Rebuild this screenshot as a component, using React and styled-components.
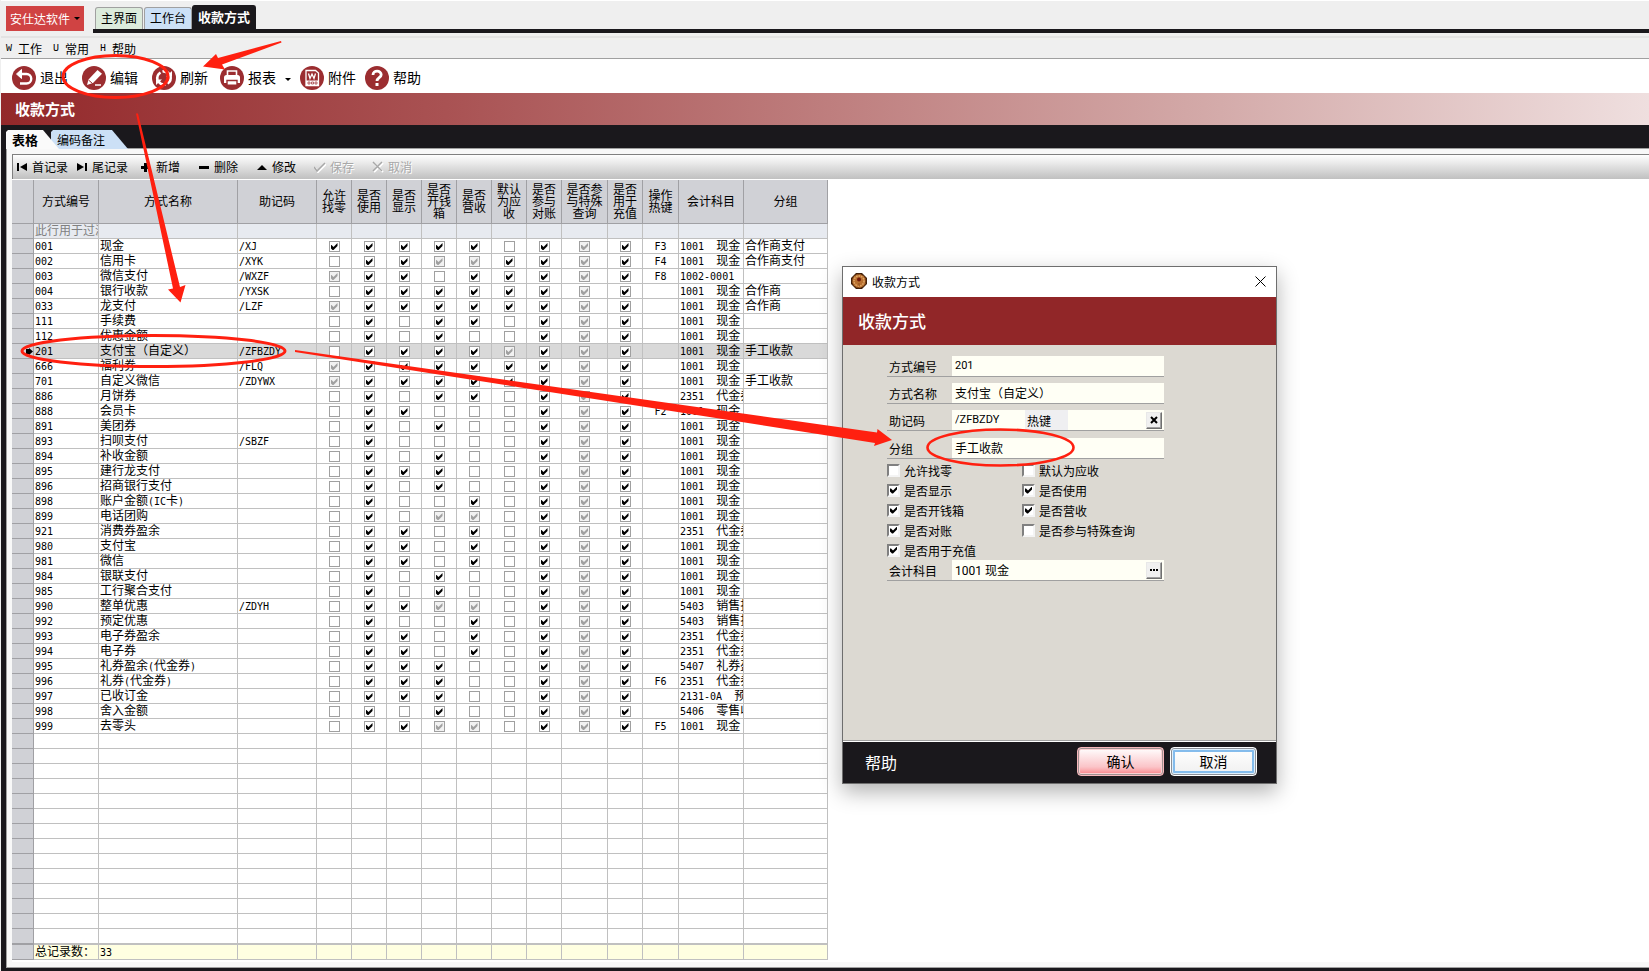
import React from "react";
import styled, { createGlobalStyle, css } from "styled-components";

const GlobalStyle = createGlobalStyle`
  *, *::before, *::after { box-sizing: border-box; }
  html, body { margin: 0; background: #fff; }
  body, button, input, table {
    font-family: "Noto Sans CJK SC", sans-serif;
    font-size: 12px;
    color: #000;
  }
  button { margin: 0; padding: 0; border: 0; background: none; white-space: nowrap; }
  a { color: inherit; text-decoration: none; }
`;

const INK = "#1a181c";
const WINE = "#912628";
const MARK = "#ff2010";

/* ---------- application frame ---------- */

const Page = styled.div`
  position: relative;
  display: flex;
  flex-direction: column;
  min-height: 100vh;
  padding-left: 1px;
  background: #efefef;
  overflow: hidden;
`;

const TopBar = styled.header`
  display: flex;
  align-items: flex-start;
  gap: 9px;
  height: 36px;
  padding-left: 5px;
  border-top: 1px solid #fff;
`;

const BrandButton = styled.button`
  display: flex;
  align-items: center;
  justify-content: center;
  gap: 4px;
  width: 78px;
  height: 25px;
  margin-top: 5px;
  background: #d04343;
  color: #fff;
`;

const Caret = styled.span`
  border: 3px solid transparent;
  border-top-color: #000;
  border-bottom-width: 0;
`;

const ModuleTabs = styled.nav`
  display: flex;
  flex: 1;
  align-items: flex-end;
  height: 32px;
  padding-left: 2px;
  border-bottom: 4px solid ${INK};
`;

const ModuleTab = styled.a`
  display: flex;
  align-items: center;
  justify-content: center;
  width: 48px;
  height: 22px;
  margin-right: 1px;
  padding-bottom: 2px;
  border: 1px solid #a0a0a0;
  border-bottom: 0;
  border-radius: 3px 3px 0 0;
  background: ${(p) => p.$tint};
  ${(p) =>
    p.$active &&
    css`
      width: 64px;
      height: 24px;
      margin-left: -1px;
      border-color: ${INK};
      background: ${INK};
      color: #fff;
      font-size: 13px;
      font-weight: 700;
    `}
`;

const MenuBar = styled.nav`
  display: flex;
  align-items: center;
  gap: 11px;
  height: 23px;
  padding-left: 5px;
  border-top: 2px solid #e3e3e3;
  border-bottom: 1px solid #a0a0a0;
`;

const MenuItem = styled.button`
  display: flex;
  align-items: center;
  gap: 6px;
`;

const AccessKey = styled.span`
  width: 6px;
  font-family: "Liberation Mono", monospace;
  font-size: 10px;
`;

const ToolBar = styled.div`
  display: flex;
  align-items: center;
  gap: 12px;
  height: 34px;
  padding: 4px 0 0 11px;
  background: #fff;
`;

const ToolGroup = styled.div`
  display: flex;
  align-items: center;
  gap: ${(p) => p.$gap};
`;

const ToolButton = styled.button`
  display: flex;
  align-items: center;
  gap: 4px;
  font-size: 14px;
  line-height: 24px;

  svg { display: block; }
  ${Caret} { margin: 2px 0 0 5px; }
`;

const ToolText = styled.span`
  padding-bottom: 2px;
  line-height: 22px;
`;

const Banner = styled.h1`
  height: 32px;
  margin: 0;
  padding-left: 14px;
  background: linear-gradient(90deg, #93282a 0%, #a95253 27%, #d3a9a8 73%, #efdfdf 100%);
  color: #fff;
  font-size: 15px;
  font-weight: 700;
  line-height: 31px;
`;

const WorkArea = styled.main`
  display: flex;
  flex: 1;
  flex-direction: column;
  padding: 0 0 3px 5px;
  background: ${INK};
`;

const SheetTabs = styled.div`
  display: flex;
  align-items: flex-end;
  height: 24px;
  margin-bottom: -1px;
`;

const SheetTab = styled.button`
  width: ${(p) => p.$width};
  height: 19px;
  padding-left: 6px;
  clip-path: polygon(0 2px, 2px 0, calc(100% - 16px) 0, 100% 100%, 0 100%);
  background: ${(p) => (p.$active ? "#fafafa" : "#cce0f6")};
  font-weight: ${(p) => (p.$active ? 700 : 400)};
  line-height: 19px;
  text-align: left;

  ${(p) =>
    p.$active &&
    css`
      position: relative;
      z-index: 1;
      margin-right: -8px;
      font-size: 13px;
    `}
`;

const Sheet = styled.section`
  display: flex;
  flex: 1;
  flex-direction: column;
  padding: 5px 0 5px 5px;
  border: solid #a0a0a0;
  border-width: 1px 0 1px 1px;
  background: #f8f8f8;
`;

const RecordBar = styled.div`
  display: flex;
  height: 25px;
  border-top: 1px solid #808080;
  border-left: 1px solid #808080;
  background: linear-gradient(#fff, #c0c0c0);
`;

const RecordButton = styled.button`
  display: flex;
  align-items: center;
  gap: 4px;
  width: ${(p) => (p.$wide ? "60px" : "58px")};
  padding: 0 0 1px ${(p) => (p.$wide ? "3px" : "7px")};

  &:disabled {
    color: #a8a8a8;
    text-shadow: 1px 1px 0 #fff;
  }
`;

const GridArea = styled.div`
  flex: 1;
  padding: 1px 0 2px;
  background: #fff;
`;

/* ---------- grid ---------- */

const Grid = styled.table`
  width: 816px;
  table-layout: fixed;
  border-collapse: separate;
  border-spacing: 0;
`;

const HeadCell = styled.th`
  height: 44px;
  padding: 0 0 2px;
  border: solid #a0a0a4;
  border-width: 0 1px 1px 0;
  background: #d0d1d6;
  font-weight: 400;
  line-height: 12px;
  word-break: break-all;
`;

const Cell = styled.td`
  height: 15px;
  padding: 0 1px;
  overflow-x: clip;
  overflow-y: visible;
  border: solid #c0c0c0;
  border-width: 0 1px 1px 0;
  background: ${(p) => p.$bg || "#fff"};
  color: ${(p) => p.$color || "#000"};
  line-height: 12px;
  text-align: ${(p) => p.$align || "left"};
  vertical-align: top;
  white-space: pre;
`;

const RowMark = styled(Cell)`
  padding: 0;
  border-color: #a0a0a4;
  background: #d0d1d6;
  vertical-align: middle;

  svg { display: block; margin-left: auto; }
`;

const LastRow = styled.tr`
  td { height: 16px; border-bottom-width: 2px; }
`;

const Latin = styled.span`
  font-family: "DejaVu Sans Mono", monospace;
  font-size: 10px;
  line-height: 10px;
`;

const Tick = css`
  &:checked::before {
    content: "";
    width: 7px;
    height: 7px;
    background: currentColor;
    clip-path: polygon(0 2px, 1px 2px, 3px 4px, 7px 0, 7px 3px, 3px 7px, 2px 7px, 0 5px);
  }
`;

const GridCheck = styled.input.attrs({ type: "checkbox" })`
  appearance: none;
  display: flex;
  align-items: center;
  justify-content: center;
  width: 11px;
  height: 11px;
  margin: 2px auto 1px;
  border: 1px solid #a0a0a0;
  background: ${(p) => (p.$mixed ? "#f2f2f2" : "#fff")};
  color: ${(p) => (p.$mixed ? "#a0a0a0" : "#000")};
  ${Tick}
`;

const COLUMNS = [
  ["方式编号", 65],
  ["方式名称", 139],
  ["助记码", 79],
  ["允许找零", 35],
  ["是否使用", 35],
  ["是否显示", 35],
  ["是否开钱箱", 35],
  ["是否营收", 35],
  ["默认为应收", 35],
  ["是否参与对账", 35],
  ["是否参与特殊查询", 46],
  ["是否用于充值", 35],
  ["操作热键", 36],
  ["会计科目", 65],
  ["分组", 84],
];

/* Flags: allow change, shown, opens till, revenue, receivable. "g" is the undefined state. */
const CASH = "1001  现金";
const VOUCHER = "2351  代金券";
const RECORDS = [
  ["001", "现金", "/XJ", "11110", "F3", CASH, "合作商支付"],
  ["002", "信用卡", "/XYK", "01gg1", "F4", CASH, "合作商支付"],
  ["003", "微信支付", "/WXZF", "g1011", "F8", "1002-0001", ""],
  ["004", "银行收款", "/YXSK", "01111", "", CASH, "合作商"],
  ["033", "龙支付", "/LZF", "g1111", "", CASH, "合作商"],
  ["111", "手续费", "", "00110", "", CASH, ""],
  ["112", "优惠金额", "", "00100", "", CASH, ""],
  ["201", "支付宝（自定义）", "/ZFBZDY", "0111g", "", CASH, "手工收款"],
  ["666", "福利券", "/FLQ", "g1111", "", CASH, ""],
  ["701", "自定义微信", "/ZDYWX", "g1111", "", CASH, "手工收款"],
  ["886", "月饼券", "", "00110", "", VOUCHER, ""],
  ["888", "会员卡", "", "01000", "F2", CASH, ""],
  ["891", "美团券", "", "00100", "", CASH, ""],
  ["893", "扫呗支付", "/SBZF", "00000", "", CASH, ""],
  ["894", "补收金额", "", "00100", "", CASH, ""],
  ["895", "建行龙支付", "", "01100", "", CASH, ""],
  ["896", "招商银行支付", "", "00100", "", CASH, ""],
  ["898", "账户金额(IC卡)", "", "00010", "", CASH, ""],
  ["899", "电话团购", "", "00gg0", "", CASH, ""],
  ["921", "消费券盈余", "", "01010", "", VOUCHER, ""],
  ["980", "支付宝", "", "01010", "", CASH, ""],
  ["981", "微信", "", "01010", "", CASH, ""],
  ["984", "银联支付", "", "00100", "", CASH, ""],
  ["985", "工行聚合支付", "", "00100", "", CASH, ""],
  ["990", "整单优惠", "/ZDYH", "01gg0", "", "5403  销售折扣", ""],
  ["992", "预定优惠", "", "00010", "", "5403  销售折扣", ""],
  ["993", "电子券盈余", "", "01010", "", VOUCHER, ""],
  ["994", "电子券", "", "01010", "", VOUCHER, ""],
  ["995", "礼券盈余(代金券)", "", "01100", "", "5407  礼券盈余", ""],
  ["996", "礼券(代金券)", "", "01100", "F6", VOUCHER, ""],
  ["997", "已收订金", "", "01100", "", "2131-0A  预收", ""],
  ["998", "舍入金额", "", "00100", "", "5406  零售收入", ""],
  ["999", "去零头", "", "01gg0", "F5", CASH, ""],
];
const SELECTED = "201";
const EMPTY_ROWS = 14;

function Mixed({ text }) {
  return text
    .split(/([\x20-\x7e]+)/)
    .filter(Boolean)
    .map((part, i) => (/^[\x20-\x7e]/.test(part) ? <Latin key={i}>{part}</Latin> : part));
}

function RecordRow({ record }) {
  const [id, name, mnemonic, flags, hotkey, account, group] = record;
  const selected = id === SELECTED;
  const bg = selected ? "#d9d9d9" : "#fff";
  const [change, shown, till, revenue, receivable] = flags;
  const states = [change, "1", shown, till, revenue, receivable, "1", "g", "1"];
  return (
    <tr aria-selected={selected}>
      <RowMark>
        {selected && (
          <svg width="7" height="7" viewBox="0 0 7 7">
            <path d="M0 1h3V0l4 3.5L3 7V6H0z" />
          </svg>
        )}
      </RowMark>
      {[id, name, mnemonic].map((text, i) => (
        <Cell key={i} $bg={bg}>
          <Mixed text={text} />
        </Cell>
      ))}
      {states.map((state, i) => (
        <Cell key={i} $bg={bg}>
          <GridCheck
            aria-label={`${name} ${COLUMNS[i + 3][0]}`}
            defaultChecked={state !== "0"}
            $mixed={state === "g"}
          />
        </Cell>
      ))}
      <Cell $bg={bg} $align="center">
        <Mixed text={hotkey} />
      </Cell>
      <Cell $bg={bg}>
        <Mixed text={account} />
      </Cell>
      <Cell $bg={bg}>{group}</Cell>
    </tr>
  );
}

function BlankCells({ texts = [], ...rest }) {
  return COLUMNS.map((column, i) => (
    <Cell key={column[0]} {...rest}>
      <Mixed text={texts[i] || ""} />
    </Cell>
  ));
}

function PaymentGrid() {
  return (
    <Grid>
      <colgroup>
        <col width="22" />
        {COLUMNS.map(([title, width]) => (
          <col key={title} width={width} />
        ))}
      </colgroup>
      <thead>
        <tr>
          <HeadCell />
          {COLUMNS.map(([title]) => (
            <HeadCell key={title} scope="col">
              {title}
            </HeadCell>
          ))}
        </tr>
      </thead>
      <tbody>
        <tr>
          <RowMark />
          <BlankCells texts={["此行用于过滤"]} $bg="#e7eaf0" $color="#808080" />
        </tr>
        {RECORDS.map((record) => (
          <RecordRow key={record[0]} record={record} />
        ))}
        {Array.from({ length: EMPTY_ROWS }, (_, i) => {
          const Row = i === EMPTY_ROWS - 1 ? LastRow : "tr";
          return (
            <Row key={i}>
              <RowMark />
              <BlankCells />
            </Row>
          );
        })}
      </tbody>
      <tfoot>
        <tr>
          <RowMark />
          <BlankCells texts={["总记录数：", String(RECORDS.length)]} $bg="#ffffe1" />
        </tr>
      </tfoot>
    </Grid>
  );
}

/* ---------- icons ---------- */

function Disc({ children }) {
  return (
    <svg width="24" height="24" viewBox="0 0 24 24" fill="none" aria-hidden="true">
      <circle cx="12" cy="12" r="12" fill="#9b2d30" />
      {children}
    </svg>
  );
}

const ExitIcon = () => (
  <Disc>
    <path d="M6 8h8.5a4.700 4.700 0 0 1 0 9.500H8" stroke="#fff" strokeWidth="2.400" />
    <path d="M9.500 3.500 4.500 8l5 4.500z" fill="#fff" stroke="#fff" />
  </Disc>
);
const EditIcon = () => (
  <Disc>
    <path d="M15.500 4 20 7.800 11 17 5 19l1.500-5.500z" fill="#fff" />
    <path d="m6.500 14 4 3.500" stroke="#9b2d30" />
    <path d="M13 19h6" stroke="#fff" strokeWidth="1.500" />
  </Disc>
);
const RefreshIcon = () => (
  <Disc>
    <path
      d="M5.500 14a7 7 0 0 1 3-7.500M10.500 5.500a7 7 0 0 1 7 3M18.500 10a7 7 0 0 1-3 7.500M13.500 18.500a7 7 0 0 1-7-3"
      stroke="#fff"
      strokeWidth="2.600"
    />
    <path d="M14 10.500h6V5zM10 13.500H4V19z" fill="#fff" />
  </Disc>
);
const PrintIcon = () => (
  <Disc>
    <path d="M7.500 9V5h9v4" stroke="#fff" strokeWidth="1.600" />
    <path d="M4 11.500A2.500 2.500 0 0 1 6.500 9h11a2.500 2.500 0 0 1 2.500 2.500V17H4z" fill="#fff" />
    <path d="M7 14.500h10v4.800H7z" fill="#fff" stroke="#9b2d30" strokeWidth="1.400" />
  </Disc>
);
const AttachIcon = () => (
  <Disc>
    <path d="M6 4.500h9.500L18.500 7v12.500H6z" stroke="#fff" strokeWidth="1.300" />
    <path d="m8.500 7.500 1.500 5 2-4.500 2 4.500 1.500-5" stroke="#fff" strokeWidth="1.300" />
    <path d="M6 14.500h12.500v5H6z" fill="#fff" />
    <path d="M8 16h2v2H8zM11.500 16h2v2h-2zM15 16h2v2h-2z" stroke="#9b2d30" strokeWidth=".7" />
  </Disc>
);
const HelpIcon = () => (
  <Disc>
    <path d="M8 9c0-5 8.200-5 8.200-.3 0 3-4.200 3-4.200 6.300" stroke="#fff" strokeWidth="2.800" />
    <path d="M10.500 17h3v3h-3z" fill="#fff" />
  </Disc>
);

const GLYPHS = {
  first: <path d="M1 2h2v8H1zM11 2v8L4 6z" />,
  last: <path d="M9 2h2v8H9zM1 2v8l7-4z" />,
  add: <path d="M4 2h3v3h3v3H7v3H4V8H1V5h3z" />,
  remove: <path d="M1 5h10v3H1z" />,
  edit: <path d="M6 4l5 5H1z" />,
  save: (
    <>
      <path d="m1 7 3 4 8-8" fill="none" stroke="#fff" strokeWidth="2" />
      <path d="m0 6 3 4 8-8" fill="none" stroke="#a8a8a8" strokeWidth="1.500" />
    </>
  ),
  cancel: (
    <>
      <path d="m2 2 9 9M11 2l-9 9" fill="none" stroke="#fff" strokeWidth="2" />
      <path d="m1 1 9 9M10 1l-9 9" fill="none" stroke="#a8a8a8" strokeWidth="1.500" />
    </>
  ),
};

const Glyph = ({ name }) => (
  <svg width="12" height="12" viewBox="0 0 12 12" aria-hidden="true">
    {GLYPHS[name]}
  </svg>
);

const TOOL_GROUPS = [
  {
    gap: "14px",
    tools: [
      ["退出", ExitIcon],
      ["编辑", EditIcon],
      ["刷新", RefreshIcon],
    ],
  },
  {
    gap: "9px",
    tools: [
      ["报表", PrintIcon, true],
      ["附件", AttachIcon],
      ["帮助", HelpIcon],
    ],
  },
];

const RECORD_ACTIONS = [
  ["首记录", "first"],
  ["尾记录", "last"],
  ["新增", "add"],
  ["删除", "remove"],
  ["修改", "edit"],
  ["保存", "save", true],
  ["取消", "cancel", true],
];

/* ---------- dialog ---------- */

const Dialog = styled.section`
  position: absolute;
  top: 266px;
  left: 842px;
  display: flex;
  flex-direction: column;
  width: 435px;
  height: 518px;
  border: 1px solid #6e6e6e;
  background: #dcd9d2;
  box-shadow: 0 8px 20px rgba(0, 0, 0, 0.3);
`;

const TitleBar = styled.div`
  display: flex;
  align-items: center;
  gap: 5px;
  height: 30px;
  padding: 0 10px 2px 8px;
  background: #fff;
`;

const CloseButton = styled.button`
  display: flex;
  margin-left: auto;
`;

const DialogHeading = styled.h2`
  height: 48px;
  margin: 0;
  padding-left: 15px;
  background: ${WINE};
  color: #fff;
  font-size: 17px;
  font-weight: 500;
  line-height: 47px;
`;

const Form = styled.form`
  display: flex;
  flex: 1;
  flex-direction: column;
  width: 321px;
  padding: 11px 0 0 44px;
`;

const Field = styled.div`
  display: flex;
  height: 21px;
  margin-bottom: ${(p) => p.$after || "6px"};
  border-bottom: 1px solid #a0a0a0;
`;

const FieldLabel = styled.label`
  width: 65px;
  padding: 2px 0 0 2px;
  line-height: 18px;
`;

const InlineLabel = styled(FieldLabel)`
  width: 43px;
  background: #efeff1;
`;

const TextBox = styled.input`
  flex: ${(p) => (p.$width ? "none" : 1)};
  width: ${(p) => p.$width || "auto"};
  min-width: 0;
  padding: 0 3px 1px;
  border: 0;
  outline: 0;
  background: #fffff5;
  font-family: Roboto, "Noto Sans CJK SC", sans-serif;
  font-size: ${(p) => (p.$small ? "11px" : "12px")};
`;

const ButtonSlot = styled.span`
  display: flex;
  align-items: center;
  padding-right: 2px;
  background: #fffff5;
`;

const TinyButton = styled.button`
  display: flex;
  align-items: center;
  justify-content: center;
  width: 16px;
  height: 17px;
  border: 1px solid;
  border-color: #e8e8e8 #707070 #707070 #e8e8e8;
  background: #f0f0f0;
  box-shadow: inset -1px -1px 0 #a0a0a0;
`;

const Options = styled.div`
  display: grid;
  grid-template-columns: 135px 1fr;
  grid-auto-rows: 20px;
`;

const Option = styled.label`
  display: flex;
  align-items: center;
  gap: 4px;
  white-space: nowrap;
`;

const OptionCheck = styled.input.attrs({ type: "checkbox" })`
  appearance: none;
  display: flex;
  align-items: center;
  justify-content: center;
  width: 13px;
  height: 13px;
  margin: 0;
  border: 2px solid;
  border-color: #808080 #f4f4f4 #f4f4f4 #808080;
  background: #fff;
  ${Tick}
`;

const DialogFooter = styled.footer`
  display: flex;
  align-items: center;
  gap: 6px;
  height: 43px;
  padding: 0 19px 1px 22px;
  border-top: 1px solid #a0a0a0;
  background: ${INK};
  box-shadow: inset 0 1px 0 #fff;
`;

const HelpLink = styled.a`
  margin-right: auto;
  color: #fff;
  font-size: 16px;
`;

const ActionButton = styled.button`
  width: 87px;
  height: 29px;
  padding-bottom: 2px;
  border: 1px solid ${(p) => (p.$primary ? "#f8b8bc" : "#fff")};
  border-radius: 4px;
  font-size: 14px;
  line-height: 24px;
  ${(p) =>
    p.$primary
      ? css`
          background: linear-gradient(#fff, #fbc4c8 70%, #fba4a8 85%, #f77880);
          box-shadow: inset 0 0 0 1px #a09090, inset 0 0 0 2px #fbd0d2;
        `
      : css`
          background: linear-gradient(#fff, #f0f0f0);
          box-shadow: inset 0 0 0 1px #8c9098, inset 0 0 0 2px #e0f0fc, inset 0 0 0 4px #84bcec;
        `}
`;

const OPTIONS = [
  ["允许找零", false],
  ["默认为应收", false],
  ["是否显示", true],
  ["是否使用", true],
  ["是否开钱箱", true],
  ["是否营收", true],
  ["是否对账", true],
  ["是否参与特殊查询", false],
  ["是否用于充值", true],
];

function PaymentDialog() {
  return (
    <Dialog role="dialog" aria-labelledby="dialog-heading">
      <TitleBar>
        <svg width="16" height="16" viewBox="0 0 16 16" aria-hidden="true">
          <path d="M5 0h6l5 5v6l-5 5H5l-5-5V5z" fill="#3a1c08" />
          <circle cx="8" cy="8" r="7" fill="#b87030" />
          <circle cx="8" cy="8" r="5" fill="none" stroke="#e0a868" strokeWidth="1.500" strokeDasharray="1.500 1" />
          <circle cx="8" cy="8" r="7" fill="none" stroke="#5a2c0c" strokeDasharray="2 1.500" />
          <circle cx="8" cy="6.500" r="2" fill="#701808" />
          <path d="M8 10v3" stroke="#8a4c1c" />
        </svg>
        <span>收款方式</span>
        <CloseButton type="button" aria-label="关闭">
          <svg width="11" height="11" viewBox="0 0 11 11" stroke="#000">
            <path d="m.5.5 10 10M10.500.5l-10 10" />
          </svg>
        </CloseButton>
      </TitleBar>
      <DialogHeading id="dialog-heading">收款方式</DialogHeading>
      <Form>
        <Field>
          <FieldLabel htmlFor="code">方式编号</FieldLabel>
          <TextBox id="code" $small defaultValue="201" />
        </Field>
        <Field>
          <FieldLabel htmlFor="name">方式名称</FieldLabel>
          <TextBox id="name" defaultValue="支付宝（自定义）" />
        </Field>
        <Field $after="7px">
          <FieldLabel htmlFor="mnemonic">助记码</FieldLabel>
          <TextBox id="mnemonic" $small $width="73px" defaultValue="/ZFBZDY" />
          <InlineLabel htmlFor="hotkey">热键</InlineLabel>
          <TextBox id="hotkey" defaultValue="" />
          <ButtonSlot>
            <TinyButton type="button" aria-label="清除热键">
              <svg width="8" height="8" viewBox="0 0 8 8" stroke="#000" strokeWidth="2">
                <path d="m1 1 6 6M7 1 1 7" />
              </svg>
            </TinyButton>
          </ButtonSlot>
        </Field>
        <Field $after="1px">
          <FieldLabel htmlFor="group">分组</FieldLabel>
          <TextBox id="group" defaultValue="手工收款" />
        </Field>
        <Options>
          {OPTIONS.map(([text, on]) => (
            <Option key={text}>
              <OptionCheck defaultChecked={on} />
              {text}
            </Option>
          ))}
        </Options>
        <Field>
          <FieldLabel htmlFor="account">会计科目</FieldLabel>
          <TextBox id="account" defaultValue="1001 现金" />
          <ButtonSlot>
            <TinyButton type="button" aria-label="选择会计科目">
              <svg width="8" height="2" viewBox="0 0 8 2">
                <path d="M0 0h2v2H0zM3 0h2v2H3zM6 0h2v2H6z" />
              </svg>
            </TinyButton>
          </ButtonSlot>
        </Field>
      </Form>
      <DialogFooter>
        <HelpLink href="#help">帮助</HelpLink>
        <ActionButton type="button" $primary>
          确认
        </ActionButton>
        <ActionButton type="button">取消</ActionButton>
      </DialogFooter>
    </Dialog>
  );
}

/* ---------- hand-drawn marks over the window ---------- */

const MarkLayer = styled.svg`
  position: absolute;
  top: 0;
  left: 0;
  pointer-events: none;
`;

function Marks() {
  return (
    <MarkLayer width="1100" height="500" viewBox="0 0 1100 500" fill={MARK} aria-hidden="true">
      <g fill="none" stroke={MARK} strokeWidth="3">
        <ellipse cx="115.500" cy="76.500" rx="52.500" ry="21" />
        <ellipse cx="153.500" cy="351" rx="131.500" ry="15.500" />
        <ellipse cx="1000.500" cy="447.500" rx="73" ry="18" strokeWidth="2.600" />
      </g>
      <path d="M203 66.500 216 54l2 4L281 41l.5 1.500L222 64.500l3 5z" />
      <path d="M136 113.500h2L180 287l5.500-2-5 17.500-12.500-13 5-1z" />
      <path d="M295 350 877 432.500l.5-3.500L892 440l-18 6 1-3L295 352z" />
    </MarkLayer>
  );
}

export default function App() {
  return (
    <>
      <GlobalStyle />
      <Page>
        <TopBar>
          <BrandButton type="button">
            安仕达软件
            <Caret />
          </BrandButton>
          <ModuleTabs>
            <ModuleTab href="#main" $tint="#dcebdc">
              主界面
            </ModuleTab>
            <ModuleTab href="#desk" $tint="#cce0f6">
              工作台
            </ModuleTab>
            <ModuleTab href="#payment" $active>
              收款方式
            </ModuleTab>
          </ModuleTabs>
        </TopBar>
        <MenuBar>
          {[
            ["W", "工作"],
            ["U", "常用"],
            ["H", "帮助"],
          ].map(([key, text]) => (
            <MenuItem key={key} type="button">
              <AccessKey>{key}</AccessKey>
              {text}
            </MenuItem>
          ))}
        </MenuBar>
        <ToolBar>
          {TOOL_GROUPS.map(({ gap, tools }) => (
            <ToolGroup key={gap} $gap={gap}>
              {tools.map(([text, Icon, hasMenu]) => (
                <ToolButton key={text} type="button">
                  <Icon />
                  <ToolText>{text}</ToolText>
                  {hasMenu && <Caret />}
                </ToolButton>
              ))}
            </ToolGroup>
          ))}
        </ToolBar>
        <Banner>收款方式</Banner>
        <WorkArea>
          <SheetTabs>
            <SheetTab type="button" $active $width="53px">
              表格
            </SheetTab>
            <SheetTab type="button" $width="77px">
              编码备注
            </SheetTab>
          </SheetTabs>
          <Sheet>
            <RecordBar>
              {RECORD_ACTIONS.map(([text, glyph, disabled]) => (
                <RecordButton key={text} type="button" disabled={disabled} $wide={text.length > 2}>
                  <Glyph name={glyph} />
                  {text}
                </RecordButton>
              ))}
            </RecordBar>
            <GridArea>
              <PaymentGrid />
            </GridArea>
          </Sheet>
        </WorkArea>
        <PaymentDialog />
        <Marks />
      </Page>
    </>
  );
}
